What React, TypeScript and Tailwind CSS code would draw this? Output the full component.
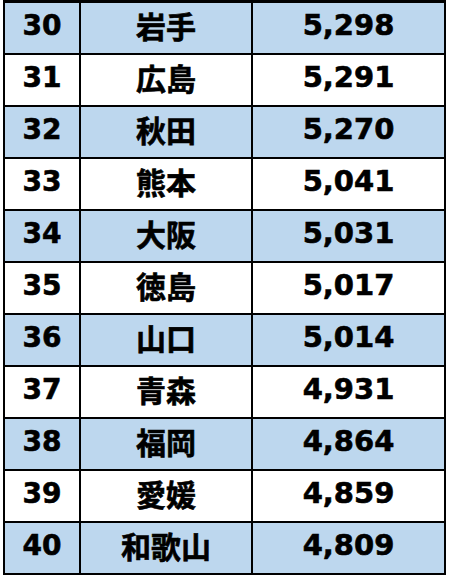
import React from 'react';

const rows = [
  { rank: 30, pref: '岩手', value: '5,298' },
  { rank: 31, pref: '広島', value: '5,291' },
  { rank: 32, pref: '秋田', value: '5,270' },
  { rank: 33, pref: '熊本', value: '5,041' },
  { rank: 34, pref: '大阪', value: '5,031' },
  { rank: 35, pref: '徳島', value: '5,017' },
  { rank: 36, pref: '山口', value: '5,014' },
  { rank: 37, pref: '青森', value: '4,931' },
  { rank: 38, pref: '福岡', value: '4,864' },
  { rank: 39, pref: '愛媛', value: '4,859' },
  { rank: 40, pref: '和歌山', value: '4,809' },
];

export default function App() {
  return (
    <div className="w-[450px] h-[577px] bg-white font-['DejaVu_Sans','Noto_Sans_CJK_JP',sans-serif] font-bold text-black [-webkit-text-stroke:0.6px_black]">
      <div className="ml-[3px] w-[443px] border-x-2 border-t-[3px] border-black">
        {rows.map((r, i) => (
          <div
            key={r.rank}
            className={`flex h-[52px] border-b-2 border-black ${i % 2 === 0 ? 'bg-[#bdd7ee]' : 'bg-white'}`}
          >
            <div className="w-[76px] border-r-2 border-black flex items-center justify-center pb-[5px] text-[28px]">
              {r.rank}
            </div>
            <div className="w-[172px] border-r-2 border-black flex items-center justify-center pb-[5px] text-[30px] font-['Noto_Sans_CJK_JP',sans-serif]">
              {r.pref}
            </div>
            <div className="flex-1 flex items-center justify-center pb-[5px] text-[29px]">
              {r.value}
            </div>
          </div>
        ))}
      </div>
    </div>
  );
}
